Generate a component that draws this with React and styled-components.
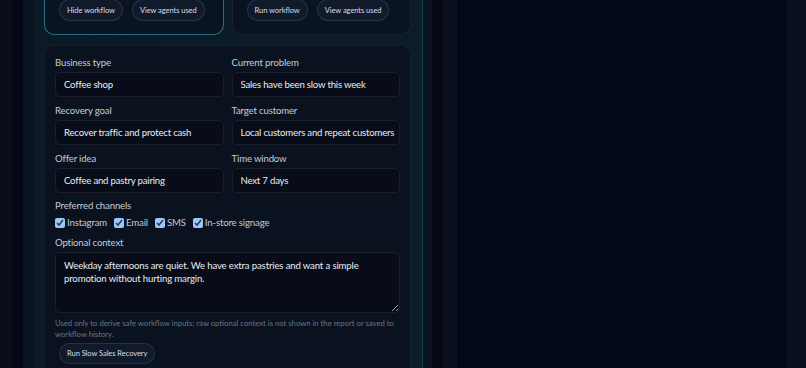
import React from "react";
import styled, { createGlobalStyle } from "styled-components";

const GlobalStyle = createGlobalStyle`
  html, body {
    margin: 0;
    padding: 0;
    background: #0a0e1c;
    font-family: Lato, "Noto Sans", sans-serif;
    overflow: hidden;
  }
`;

const font = `Lato, "Noto Sans", sans-serif`;

const Page = styled.div`
  display: flex;
  height: 368px;
  width: 806px;
  overflow: hidden;
  padding-left: 12px;
  box-sizing: border-box;
`;

const Column = styled.div`
  width: 431px;
  flex-shrink: 0;
  background: #050814;
  padding: 0 11px;
  box-sizing: border-box;
`;

const Frame = styled.div`
  height: 100%;
  background: #0a1120;
  padding: 0 9px 0 10px;
  box-sizing: border-box;
`;

const Panel = styled.div`
  height: 100%;
  background: linear-gradient(90deg, #0b1a26 0%, #0c1d29 100%);
  border-right: 1px solid rgba(45, 212, 191, 0.22);
  padding: 0 11px;
  box-sizing: border-box;
  display: flex;
  flex-direction: column;
  gap: 10px;
`;

const Side = styled.div`
  flex: 1;
  display: flex;
  background: #0b0f22;
  padding-left: 14px;
`;

const SideInner = styled.div`
  width: 330px;
  background: #03071a;
  border-right: 1px solid rgba(255, 255, 255, 0.03);
`;

const TopRow = styled.div`
  display: grid;
  grid-template-columns: minmax(0, 1fr) minmax(0, 1fr);
  gap: 8px;
  margin-top: -14px;
`;

const WorkflowCard = styled.div`
  background: #0a1322;
  border: 1px solid ${(p) => (p.$active ? "rgba(56, 189, 200, 0.55)" : "rgba(255, 255, 255, 0.06)")};
  border-radius: 10px;
  padding: 12px 14px 13px;
  display: flex;
  gap: 9px;
`;

const Pill = styled.button`
  font-family: ${font};
  font-size: 7.5px;
  letter-spacing: -0.05px;
  color: #d6dce6;
  background: #111a2b;
  border: 1px solid rgba(255, 255, 255, 0.1);
  border-radius: 999px;
  height: ${(p) => p.$h || "22px"};
  padding: 0 7px;
  white-space: nowrap;
  margin: ${(p) => p.$margin || "0"};
  align-self: flex-start;
`;

const FormCard = styled.div`
  background: #0a1220;
  border: 1px solid rgba(255, 255, 255, 0.05);
  border-radius: 10px;
  padding: 10px 10px 12px;
  display: flex;
  flex-direction: column;
`;

const Grid = styled.div`
  display: grid;
  grid-template-columns: minmax(0, 1fr) minmax(0, 1fr);
  column-gap: 8px;
  row-gap: 7px;
`;

const Field = styled.label`
  display: flex;
  flex-direction: column;
  gap: 2px;
`;

const Label = styled.span`
  font-size: 9.6px;
  letter-spacing: -0.15px;
  line-height: 14px;
  color: #c3cbd6;
`;

const Input = styled.input`
  font-family: ${font};
  font-size: 9.6px;
  letter-spacing: -0.2px;
  color: #e8edf3;
  background: #070c18;
  border: 1px solid rgba(255, 255, 255, 0.08);
  border-radius: 5px;
  height: 25px;
  padding: 0 3px 0 8px;
  box-sizing: border-box;
  outline: none;
  width: 100%;
`;

const Section = styled.div`
  display: flex;
  flex-direction: column;
  gap: ${(p) => p.$gap || "3px"};
  margin-top: ${(p) => p.$top || "7px"};
`;

const Channels = styled.div`
  display: flex;
  gap: 7px;
  align-items: center;
`;

const Check = styled.label`
  display: flex;
  align-items: center;
  gap: 2px;
  font-size: 9.6px;
  letter-spacing: -0.15px;
  color: #c3cbd6;

  input {
    margin: 0;
    width: 10px;
    height: 10px;
    color-scheme: dark;
  }
`;

const Area = styled.textarea`
  font-family: ${font};
  font-size: 9.6px;
  letter-spacing: -0.15px;
  line-height: 13px;
  color: #e8edf3;
  background: #070c18;
  border: 1px solid rgba(255, 255, 255, 0.08);
  border-radius: 5px;
  height: 61px;
  padding: 6px 8px;
  box-sizing: border-box;
  outline: none;
  width: 100%;
  resize: vertical;
  color-scheme: dark;
`;

const Help = styled.p`
  margin: 5px 0 3px;
  font-size: 7.7px;
  line-height: 11px;
  color: #6a7584;
`;

const channels = ["Instagram", "Email", "SMS", "In-store signage"];

const fields = [
  ["Business type", "Coffee shop"],
  ["Current problem", "Sales have been slow this week"],
  ["Recovery goal", "Recover traffic and protect cash"],
  ["Target customer", "Local customers and repeat customers"],
  ["Offer idea", "Coffee and pastry pairing"],
  ["Time window", "Next 7 days"],
];

export default function App() {
  return (
    <>
      <GlobalStyle />
      <Page>
        <Column>
          <Frame>
            <Panel>
              <TopRow>
                <WorkflowCard $active>
                  <Pill>Hide workflow</Pill>
                  <Pill>View agents used</Pill>
                </WorkflowCard>
                <WorkflowCard>
                  <Pill>Run workflow</Pill>
                  <Pill>View agents used</Pill>
                </WorkflowCard>
              </TopRow>
              <FormCard>
                <Grid>
                  {fields.map(([label, value]) => (
                    <Field key={label}>
                      <Label>{label}</Label>
                      <Input defaultValue={value} />
                    </Field>
                  ))}
                </Grid>
                <Section $top="6px" $gap="4px">
                  <Label>Preferred channels</Label>
                  <Channels>
                    {channels.map((c) => (
                      <Check key={c}>
                        <input type="checkbox" defaultChecked />
                        {c}
                      </Check>
                    ))}
                  </Channels>
                </Section>
                <Section $top="8px" $gap="2px">
                  <Label>Optional context</Label>
                  <Area defaultValue="Weekday afternoons are quiet. We have extra pastries and want a simple promotion without hurting margin." />
                </Section>
                <Help>
                  Used only to derive safe workflow inputs; raw optional context is not shown in the report or saved to workflow history.
                </Help>
                <Pill $h="21px" $margin="0 0 0 4px">Run Slow Sales Recovery</Pill>
              </FormCard>
            </Panel>
          </Frame>
        </Column>
        <Side>
          <SideInner />
        </Side>
      </Page>
    </>
  );
}
